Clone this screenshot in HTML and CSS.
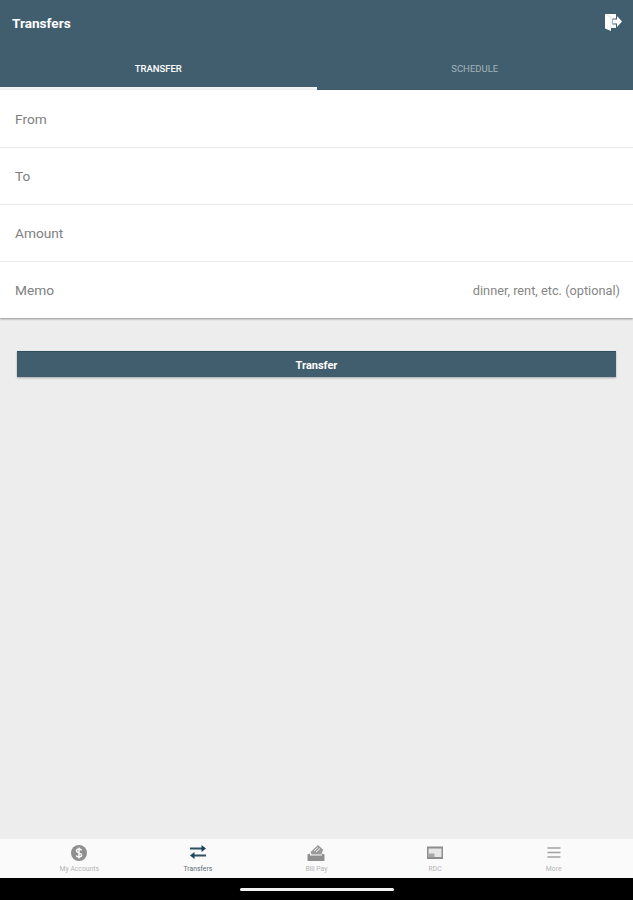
FILE: index.html
```html
<!DOCTYPE html>
<html lang="en">
<head>
    <meta charset="UTF-8">
    <meta name="viewport" content="width=device-width, initial-scale=1.0">
    <title>Transfers</title>
    <link rel="stylesheet" href="styles.css">
</head>
<body>
    <header class="header">
        <div class="header-top">
            <h1 class="header-title">Transfers</h1>
            <svg class="logout-icon" viewBox="0 0 18 18" width="18" height="18">
                <path d="M1 1H12V5.5H8.5V11.5H12V15H7V18L1 15.5Z" fill="#fff"/>
                <path d="M9 6.5H13V3L18 8.5L13 14V10.5H9Z" fill="#fff"/>
                <path d="M7 15V4L1 1.2" fill="none" stroke="#d5dde1" stroke-width="0.7"/>
            </svg>
        </div>
        <nav class="tabs">
            <div class="tab tab-active">TRANSFER</div>
            <div class="tab">SCHEDULE</div>
        </nav>
    </header>

    <section class="form-card">
        <div class="form-row"><span class="form-label">From</span></div>
        <div class="form-row"><span class="form-label">To</span></div>
        <div class="form-row"><span class="form-label">Amount</span></div>
        <div class="form-row">
            <span class="form-label">Memo</span>
            <span class="form-hint">dinner, rent, etc. (optional)</span>
        </div>
    </section>

    <main class="content">
        <button class="transfer-button">Transfer</button>
    </main>

    <nav class="bottom-nav">
        <div class="nav-item">
            <svg class="nav-icon" viewBox="0 0 18 18" width="18" height="18">
                <circle cx="9" cy="9" r="8" fill="#8f8f8f"/>
                <path d="M11.6 6.4C11.2 5.4 10.2 5 9 5C7.6 5 6.5 5.7 6.5 6.9C6.5 9.4 11.6 8.4 11.6 11C11.6 12.3 10.4 13 9 13C7.7 13 6.7 12.5 6.3 11.4M9 3.6V14.4" fill="none" stroke="#fafafa" stroke-width="1.5"/>
            </svg>
            <span class="nav-label">My Accounts</span>
        </div>
        <div class="nav-item nav-item-active">
            <svg class="nav-icon" viewBox="0 0 18 18" width="18" height="18">
                <path d="M1 4.5H13.5M17 11.5H4.5" fill="none" stroke="#2f4f62" stroke-width="2"/>
                <path d="M12.5 1L17 4.5L12.5 8ZM5.5 8L1 11.5L5.5 15Z" fill="#17445e"/>
            </svg>
            <span class="nav-label">Transfers</span>
        </div>
        <div class="nav-item">
            <svg class="nav-icon" viewBox="0 0 18 18" width="18" height="18">
                <path d="M0.5 10.5L3 9.5V11.5H15V9.5L17.5 10.5V17H0.5Z" fill="#8f8f8f"/>
                <path d="M3.5 8L11 1L16 5.5L14.5 10.5H4.5Z" fill="#9a9a9a"/>
                <path d="M7 7L11 3.5M9 8L13 4.5" stroke="#f2f2f2" stroke-width="1"/>
            </svg>
            <span class="nav-label">Bill Pay</span>
        </div>
        <div class="nav-item">
            <svg class="nav-icon" viewBox="0 0 18 18" width="18" height="18">
                <rect x="1" y="2.5" width="16" height="12.5" fill="#8c8c8c"/>
                <rect x="2.5" y="4.5" width="13" height="8.5" fill="#e6e6e6"/>
                <rect x="2.5" y="9.5" width="6" height="3.5" fill="#a8a8a8"/>
            </svg>
            <span class="nav-label">RDC</span>
        </div>
        <div class="nav-item">
            <svg class="nav-icon" viewBox="0 0 18 18" width="18" height="18">
                <path d="M2.5 4H15.5M2.5 8.5H15.5M2.5 13H15.5" fill="none" stroke="#a3a3a3" stroke-width="1.6"/>
            </svg>
            <span class="nav-label">More</span>
        </div>
    </nav>

    <div class="system-bar">
        <div class="home-pill"></div>
    </div>
</body>
</html>
```

FILE: styles.css
```css
:root {
    --primary-color: #415e6e;
}

html,
body {
    height: 100%;
}

body {
    font-family: Roboto, "Liberation Sans", sans-serif;
    margin: 0;
    height: 900px;
    background: #ededed;
    display: flex;
    flex-direction: column;
    overflow: hidden;
}

.header {
    background: var(--primary-color);
    height: 90px;
    display: flex;
    flex-direction: column;
    flex-shrink: 0;
}

.header-top {
    height: 46px;
    padding: 0 11px 0 12px;
    display: flex;
    align-items: center;
    justify-content: space-between;
}

.header-title {
    margin: 0;
    font-size: 13.6px;
    font-weight: 700;
    color: #fff;
}

.logout-icon {
    display: block;
    margin-bottom: 2px;
}

.tabs {
    flex-grow: 1;
    display: flex;
}

.tab {
    flex: 1;
    display: flex;
    align-items: center;
    justify-content: center;
    padding-top: 3px;
    font-size: 9.5px;
    color: #a3b2ba;
    border-bottom: 3px solid transparent;
}

.tab-active {
    font-weight: 500;
    color: #fff;
    border-bottom-color: #f4f4f4;
}

.form-card {
    background: #fff;
    padding-top: 1px;
    box-shadow: 0 1px 2px rgba(0,0,0,0.4);
    flex-shrink: 0;
}

.form-row {
    height: 57px;
    box-sizing: border-box;
    padding: 0 13px 0 15px;
    display: flex;
    align-items: center;
    justify-content: space-between;
    border-bottom: 1px solid #e8e8e8;
}

.form-row:last-child {
    height: 56px;
    border-bottom: none;
}

.form-label {
    font-size: 13.7px;
    color: #808080;
}

.form-hint {
    font-size: 12.75px;
    color: #858585;
}

.content {
    flex-grow: 1;
    padding: 33px 17px 0;
}

.transfer-button {
    display: block;
    width: 100%;
    height: 26px;
    padding: 1px 0 0;
    background-color: var(--primary-color);
    color: #fff;
    border: none;
    border-top: 1px solid #2f4f63;
    box-shadow: 0 1px 2px rgba(0,0,0,0.3);
    font-family: inherit;
    font-size: 11px;
    font-weight: 700;
}

.bottom-nav {
    height: 40px;
    padding: 0 20px;
    background: #fafafa;
    border-top: 1px solid #f0f0f0;
    box-sizing: border-box;
    display: flex;
    flex-shrink: 0;
}

.nav-item {
    flex: 1;
    display: flex;
    flex-direction: column;
    align-items: center;
    padding-top: 5px;
    gap: 3px;
}

.nav-icon {
    display: block;
}

.nav-label {
    font-size: 6.8px;
    color: #b5b5b5;
}

.nav-item-active .nav-label {
    color: #5f6d75;
}

.system-bar {
    height: 22px;
    background: #000;
    display: flex;
    justify-content: center;
    align-items: center;
    flex-shrink: 0;
}

.home-pill {
    width: 154px;
    height: 3px;
    border-radius: 2px;
    background: #f2f2f2;
}
```
